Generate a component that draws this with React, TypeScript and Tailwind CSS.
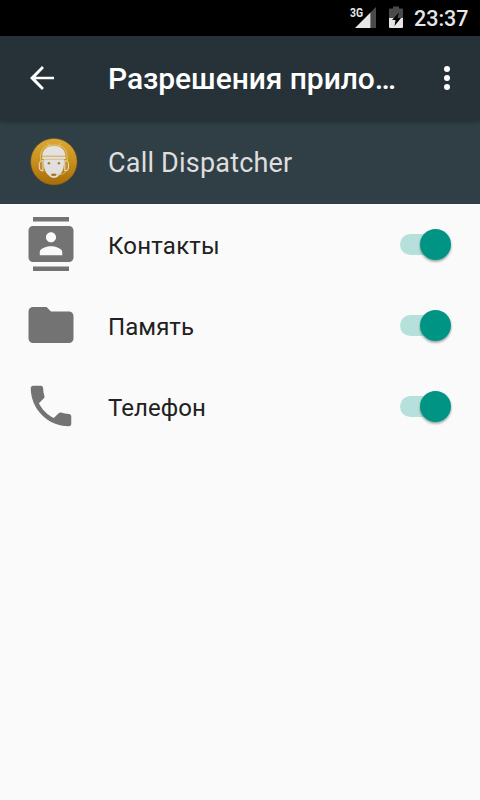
import React from "react";

function StatusBar() {
  return (
    <div className="flex h-9 shrink-0 items-start bg-black text-[#e6e6e6]">
      <svg className="ml-[346px] h-9 w-[62px] shrink-0" viewBox="346 0 62 36">
        <path d="M370.5 12.5L376 7v21h-5.500z" fill="#4a4a4a" />
        <path d="M355 28L370.5 12.5V28z" fill="#e6e6e6" />
        <text x="350" y="16.500" fill="#e6e6e6" fontSize="12.500" fontWeight="700" textLength="13" lengthAdjust="spacingAndGlyphs" fontFamily="Roboto, sans-serif">3G</text>
        <path d="M389 9.500q0-1 1-1h3V6.500h6v2h3q1 0 1 1V18h-14z" fill="#4a4a4a" />
        <path d="M389 18h14v9q0 1-1 1h-12q-1 0-1-1z" fill="#e6e6e6" />
        <path d="M399 12.500L392 20h3.500l-1 6L401 18h-3.500z" fill="#000" />
      </svg>
      <span className="ml-[6px] text-[21.500px] leading-[37px] font-medium">23:37</span>
    </div>
  );
}

function AppBadge() {
  return (
    <svg className="-mt-0.5 h-[54px] w-[54px]" viewBox="0 0 54 54">
      <defs>
        <linearGradient id="gold" x1="0" y1="0" x2="0" y2="1">
          <stop offset="0" stopColor="#dca935" />
          <stop offset="0.5" stopColor="#c88f1c" />
          <stop offset="1" stopColor="#a66c08" />
        </linearGradient>
      </defs>
      <circle cx="29.900" cy="26.700" r="23.200" fill="url(#gold)" stroke="#80591b" strokeWidth="0.500" />
      <path d="M25.500 11.500L23.600 8M34.500 11.500l1.900-3.500" stroke="#d9c69c" strokeWidth="0.700" />
      <path d="M18.200 20.700c.6-6.500 5-9.700 11.600-9.700s11 3.200 11.600 9.700z" fill="#e4e2df" />
      <path d="M16.500 25.500C15.500 13 21.500 10 29.800 10s14.300 3 13.300 15.500" stroke="#e4d9c0" strokeWidth="0.600" fill="none" />
      <path d="M19 25.500q-3.500 0-3.700 3v4.500q.2 3 3.700 3zM40.800 25.500q3.500 0 3.700 3v4.500q-.2 3-3.700 3z" fill="#c38d2b" stroke="#e7e1d4" strokeWidth="1" />
      <path d="M18.200 21.600h23.400v2.400h-1.600c.2 3.500 0 6.500-.6 9-.8 4-3 6.500-5.300 8.200-2.500 2-5.900 2-8.400 0-2.300-1.700-4.500-4.200-5.300-8.200-.6-2.500-.8-5.500-.6-9h-1.600z" fill="#e2e0df" />
      <path d="M20 24.300h19.800" stroke="#c9a662" strokeWidth="0.600" />
      <circle cx="24.900" cy="28.300" r="1.300" fill="#ad8032" />
      <circle cx="34.900" cy="28.300" r="1.300" fill="#ad8032" />
      <ellipse cx="29.700" cy="39.700" rx="2.800" ry="1.300" fill="#a77425" />
      <path d="M32.300 39.800q8 .2 9.700-3.800" stroke="#d8bd86" strokeWidth="0.800" fill="none" />
    </svg>
  );
}

function Toggle() {
  return (
    <svg className="-mt-px h-[48px] w-[60px]" viewBox="0 0 60 48">
      <defs>
        <filter id="thumb" x="-30%" y="-30%" width="160%" height="170%">
          <feDropShadow dx="0" dy="1.500" stdDeviation="1.300" floodColor="#000" floodOpacity="0.4" />
        </filter>
      </defs>
      <rect x="4" y="14" width="48" height="21" rx="10.500" fill="#b6e0dc" />
      <circle cx="39.500" cy="24.500" r="15.500" fill="#009485" filter="url(#thumb)" />
    </svg>
  );
}

const permissions = [
  {
    label: "Контакты",
    tracking: "tracking-[0.22px]",
    icon: "M20 0H4v2h16V0zM4 24h16v-2H4v2zM20 4H4c-1.100 0-2 .9-2 2v12c0 1.100.9 2 2 2h16c1.100 0 2-.9 2-2V6c0-1.100-.9-2-2-2zm-8 2.750c1.240 0 2.250 1.010 2.250 2.250s-1.010 2.250-2.250 2.250S9.750 10.240 9.750 9 10.760 6.750 12 6.750zM17 17H7v-1.500c0-1.670 3.330-2.500 5-2.500s5 .83 5 2.500V17z",
  },
  {
    label: "Память",
    tracking: "tracking-[0.05px]",
    icon: "M10 4H4c-1.100 0-1.990.9-1.990 2L2 18c0 1.100.9 2 2 2h16c1.100 0 2-.9 2-2V8c0-1.100-.9-2-2-2h-8l-2-2z",
  },
  {
    label: "Телефон",
    tracking: "tracking-[0.05px]",
    icon: "M6.620 10.790c1.440 2.830 3.760 5.140 6.590 6.590l2.200-2.200c.27-.27.67-.36 1.020-.24 1.120.37 2.330.57 3.570.57.55 0 1 .45 1 1V20c0 .55-.45 1-1 1-9.390 0-17-7.610-17-17 0-.55.45-1 1-1h3.500c.55 0 1 .45 1 1 0 1.250.2 2.450.57 3.570.11.35.03.74-.25 1.020l-2.200 2.200z",
  },
];

export default function App() {
  return (
    <div className="flex h-[800px] w-[480px] flex-col overflow-hidden bg-[#fafafa] font-[Roboto,'Noto_Sans',sans-serif]">
      <StatusBar />
      <header className="z-10 flex h-[85px] shrink-0 items-center bg-[#263238] pl-6 text-white shadow-[0_1px_4px_rgba(0,0,0,0.3)]">
        <svg className="mt-[-1px] h-9 w-9" viewBox="0 0 24 24" fill="currentColor">
          <path d="M20 11.100H7.700l5.600-5.800L12 4l-8 8 8 8 1.300-1.300-5.600-5.800H20z" />
        </svg>
        <h1 className="ml-12 w-[321px] pt-px text-[30px] leading-9 font-medium tracking-[-0.06px] whitespace-nowrap">Разрешения прило…</h1>
        <svg className="mt-[-1px] h-9 w-9 shrink-0" viewBox="0 0 36 36" fill="currentColor">
          <circle cx="18" cy="9" r="3" />
          <circle cx="18" cy="18" r="3" />
          <circle cx="18" cy="27" r="3" />
        </svg>
      </header>
      <section className="flex h-[83px] shrink-0 items-center bg-[#303f46] pl-6 text-[#dedede]">
        <AppBadge />
        <h2 className="ml-[30px] text-[27px] leading-9 tracking-[0.2px]">Call Dispatcher</h2>
      </section>
      <ul>
        {permissions.map((item) => (
          <li key={item.label} className="flex h-[81px] items-center px-6">
            <svg className="-mt-px h-[54px] w-[54px] text-[#737373]" viewBox="0 0 24 24" fill="currentColor">
              <path d={item.icon} />
            </svg>
            <span className={`ml-[30px] flex-1 pt-0.5 text-2xl text-[#212121] ${item.tracking}`}>{item.label}</span>
            <Toggle />
          </li>
        ))}
      </ul>
    </div>
  );
}
